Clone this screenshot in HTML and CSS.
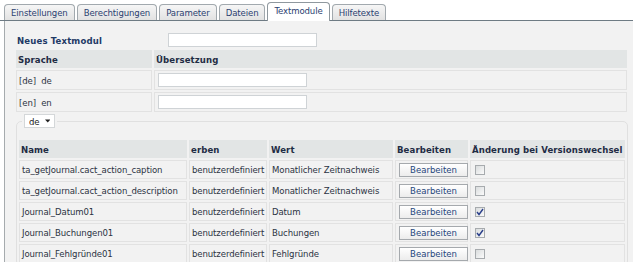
FILE: index.html
```html
<!DOCTYPE html>
<html lang="de">
<head>
    <meta charset="UTF-8">
    <title>Textmodule</title>
    <link rel="stylesheet" href="styles.css">
</head>
<body>
    <div class="tabs">
        <a class="tab">Einstellungen</a>
        <a class="tab">Berechtigungen</a>
        <a class="tab">Parameter</a>
        <a class="tab">Dateien</a>
        <a class="tab active">Textmodule</a>
        <a class="tab">Hilfetexte</a>
    </div>
    <div class="panel">
        <div class="new-row">
            <label class="new-label">Neues Textmodul</label>
            <input type="text" class="field">
        </div>
        <table class="lang-table">
            <colgroup><col class="c-lang"><col></colgroup>
            <tr><th>Sprache</th><th>Übersetzung</th></tr>
            <tr><td>[de]&nbsp; de</td><td><input type="text" class="field"></td></tr>
            <tr><td>[en]&nbsp; en</td><td><input type="text" class="field"></td></tr>
        </table>
        <fieldset class="lang-box">
            <legend><span class="select">de <svg width="7" height="4" viewBox="0 0 7 4"><path d="M0 0h7L3.5 4z" fill="#222"/></svg></span></legend>
            <table class="text-table">
                <colgroup>
                    <col class="c-name"><col class="c-inherit"><col class="c-value"><col class="c-edit"><col>
                </colgroup>
                <tr><th>Name</th><th>erben</th><th>Wert</th><th>Bearbeiten</th><th>Änderung bei Versionswechsel</th></tr>
                <tr>
                    <td>ta_getJournal.cact_action_caption</td><td>benutzerdefiniert</td><td>Monatlicher Zeitnachweis</td>
                    <td><button class="edit-btn">Bearbeiten</button></td><td><span class="chk"></span></td>
                </tr>
                <tr>
                    <td>ta_getJournal.cact_action_description</td><td>benutzerdefiniert</td><td>Monatlicher Zeitnachweis</td>
                    <td><button class="edit-btn">Bearbeiten</button></td><td><span class="chk"></span></td>
                </tr>
                <tr>
                    <td>Journal_Datum01</td><td>benutzerdefiniert</td><td>Datum</td>
                    <td><button class="edit-btn">Bearbeiten</button></td>
                    <td><span class="chk"><svg width="8" height="8" viewBox="0 0 8 8"><path d="M1 4l2 2.5L7 1" fill="none" stroke="#2a3f8a" stroke-width="1.4"/></svg></span></td>
                </tr>
                <tr>
                    <td>Journal_Buchungen01</td><td>benutzerdefiniert</td><td>Buchungen</td>
                    <td><button class="edit-btn">Bearbeiten</button></td>
                    <td><span class="chk"><svg width="8" height="8" viewBox="0 0 8 8"><path d="M1 4l2 2.5L7 1" fill="none" stroke="#2a3f8a" stroke-width="1.4"/></svg></span></td>
                </tr>
                <tr>
                    <td>Journal_Fehlgründe01</td><td>benutzerdefiniert</td><td>Fehlgründe</td>
                    <td><button class="edit-btn">Bearbeiten</button></td><td><span class="chk"></span></td>
                </tr>
            </table>
        </fieldset>
    </div>
</body>
</html>
```
FILE: styles.css
```css
body {
    margin: 0;
    background-color: #fff;
    font-family: "DejaVu Sans Condensed", "DejaVu Sans", sans-serif;
    font-size: 9.5px;
    letter-spacing: -0.1px;
    color: #2b3342;
    overflow: hidden;
}
.tabs {
    display: flex;
    align-items: flex-end;
    gap: 2px;
    height: 20px;
    padding-left: 4px;
    border-bottom: 1px solid #6e7b84;
}
.tab {
    height: 15px;
    line-height: 15px;
    padding: 0 6px;
    border: 1px solid #a2a9ae;
    border-bottom: none;
    border-radius: 4px 4px 0 0;
    background: linear-gradient(#f6f6f6, #e2e2e2);
    color: #2b4170;
    cursor: pointer;
}
.tab.active {
    height: 18px;
    line-height: 16px;
    margin-bottom: -1px;
    background: #fff;
    border-color: #8f989e;
}
.panel {
    margin-left: 4px;
    height: 260px;
    padding: 12px 0 0 9px;
    background-color: #f2f2f2;
    border-left: 1px solid #a6abae;
}
.new-row {
    display: flex;
    align-items: center;
    padding-left: 3px;
}
.new-label {
    width: 151px;
    font-weight: bold;
    letter-spacing: 0.15px;
    color: #1f3a66;
}
.field {
    box-sizing: border-box;
    width: 149px;
    height: 14px;
    margin: 0;
    padding: 0 2px;
    border: 1px solid #cfd3d6;
    background-color: #fff;
    font: inherit;
}
table {
    border-collapse: separate;
    border-spacing: 2px;
    table-layout: fixed;
}
th, td {
    text-align: left;
    white-space: nowrap;
}
th {
    height: 18px;
    padding: 0 2px;
    background-color: #e2e5e5;
    font-weight: bold;
    letter-spacing: 0.1px;
    color: #1f2c44;
}
td {
    padding: 0 2px;
    border: 1px solid #e2e2e2;
}
.lang-table {
    width: 615px;
    margin-top: 1px;
}
.lang-table .c-lang {
    width: 136px;
}
.lang-table td {
    height: 18px;
}
.lang-table td .field {
    margin-left: 1px;
    vertical-align: middle;
}
.lang-box {
    width: 610px;
    margin: 0 0 0 2px;
    padding: 10px 0 0 0;
    border: 1px solid #e0e0e0;
    border-radius: 5px;
}
.lang-box legend {
    margin-left: 5px;
    padding: 0 2px;
}
.select {
    display: inline-flex;
    align-items: center;
    gap: 5px;
    box-sizing: border-box;
    width: 31px;
    height: 14px;
    padding: 0 4px;
    border: 1px solid #d4d7d9;
    background-color: #fff;
    color: #222;
}
.text-table {
    width: 610px;
}
.text-table th {
    height: 18px;
}
.text-table td {
    height: 17px;
}
.c-name { width: 168px; }
.c-inherit { width: 78px; }
.c-value { width: 124px; }
.c-edit { width: 73px; }
.edit-btn {
    box-sizing: border-box;
    width: 69px;
    height: 14px;
    margin: 0 0 0 1px;
    padding: 0;
    border: 1px solid #a5a9ad;
    background: linear-gradient(#ffffff, #ececec);
    font: inherit;
    color: #25467c;
    vertical-align: middle;
    cursor: pointer;
}
.chk {
    display: inline-flex;
    align-items: center;
    justify-content: center;
    box-sizing: border-box;
    width: 10px;
    height: 10px;
    margin-left: 2px;
    border: 1px solid #a7abae;
    background: linear-gradient(135deg, #d9dcdd, #fbfbfb);
    vertical-align: middle;
}
```
